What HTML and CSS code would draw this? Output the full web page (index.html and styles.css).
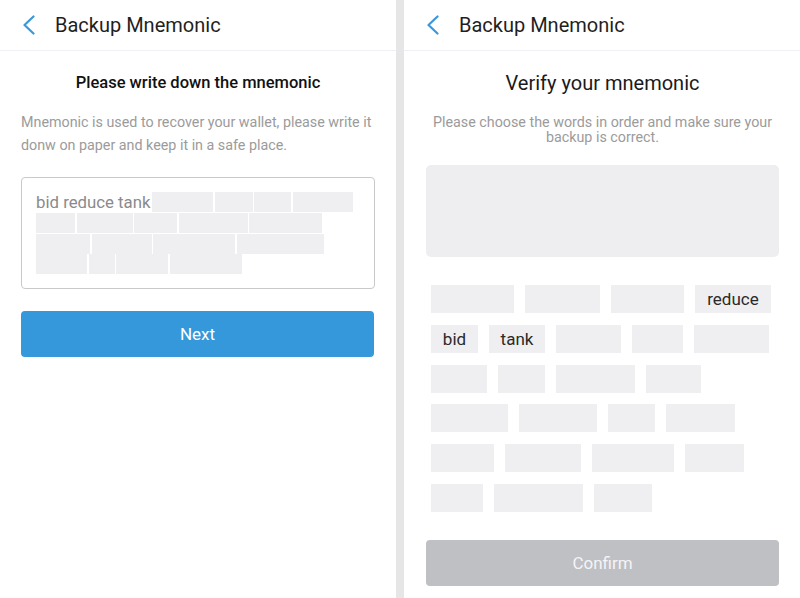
FILE: index.html
```html
<!DOCTYPE html>
<html>
<head>
<meta charset="utf-8">
<link rel="stylesheet" href="styles.css">
</head>
<body>
<div class="screen">
  <section class="panel">
    <header class="topbar">
      <svg class="back" width="14" height="20" viewBox="0 0 14 20"><polyline points="11.5,1.5 2.5,10 11.5,18.5" fill="none" stroke="#3a97dc" stroke-width="2.2" stroke-linecap="round" stroke-linejoin="round"/></svg>
      <h1 class="title">Backup Mnemonic</h1>
    </header>
    <div class="content">
      <h2 class="heading-bold">Please write down the mnemonic</h2>
      <p class="desc-left">Mnemonic is used to recover your wallet, please write it donw on paper and keep it in a safe place.</p>
      <div class="phrase-box">
        <div class="phrase-row"><span class="phrase-text">bid reduce tank</span><span class="mask" style="width:61px"></span><span class="mask" style="width:38px"></span><span class="mask" style="width:37px"></span><span class="mask" style="width:60px"></span></div>
        <div class="phrase-row"><span class="mask" style="width:39px"></span><span class="mask" style="width:56px"></span><span class="mask" style="width:43px"></span><span class="mask" style="width:69px"></span><span class="mask" style="width:73px"></span></div>
        <div class="phrase-row"><span class="mask" style="width:54px"></span><span class="mask" style="width:60px"></span><span class="mask" style="width:82px"></span><span class="mask" style="width:87px"></span></div>
        <div class="phrase-row"><span class="mask" style="width:51px"></span><span class="mask" style="width:26px"></span><span class="mask" style="width:52px"></span><span class="mask" style="width:72px"></span></div>
      </div>
      <button class="btn btn-primary">Next</button>
    </div>
  </section>
  <div class="divider"></div>
  <section class="panel">
    <header class="topbar">
      <svg class="back" width="14" height="20" viewBox="0 0 14 20"><polyline points="11.5,1.5 2.5,10 11.5,18.5" fill="none" stroke="#3a97dc" stroke-width="2.2" stroke-linecap="round" stroke-linejoin="round"/></svg>
      <h1 class="title">Backup Mnemonic</h1>
    </header>
    <div class="content content-right">
      <h2 class="heading">Verify your mnemonic</h2>
      <p class="desc-center">Please choose the words in order and make sure your backup is correct.</p>
      <div class="answer-box"></div>
      <div class="tiles">
        <div class="tile-row"><span class="tile" style="width:83px"></span><span class="tile" style="width:75px"></span><span class="tile" style="width:73px"></span><span class="tile word" style="width:76px">reduce</span></div>
        <div class="tile-row"><span class="tile word" style="width:47px">bid</span><span class="tile word" style="width:56px">tank</span><span class="tile" style="width:65px"></span><span class="tile" style="width:51px"></span><span class="tile" style="width:75px"></span></div>
        <div class="tile-row"><span class="tile" style="width:56px"></span><span class="tile" style="width:47px"></span><span class="tile" style="width:79px"></span><span class="tile" style="width:55px"></span></div>
        <div class="tile-row"><span class="tile" style="width:77px"></span><span class="tile" style="width:78px"></span><span class="tile" style="width:47px"></span><span class="tile" style="width:69px"></span></div>
        <div class="tile-row"><span class="tile" style="width:63px"></span><span class="tile" style="width:76px"></span><span class="tile" style="width:82px"></span><span class="tile" style="width:59px"></span></div>
        <div class="tile-row"><span class="tile" style="width:52px"></span><span class="tile" style="width:89px"></span><span class="tile" style="width:58px"></span></div>
      </div>
      <button class="btn btn-disabled">Confirm</button>
    </div>
  </section>
</div>
</body>
</html>
```

FILE: styles.css
```css
* { box-sizing: border-box; }
html, body {
  margin: 0;
  padding: 0;
  width: 800px;
  height: 598px;
  overflow: hidden;
  background: #ffffff;
  font-family: Roboto, "Liberation Sans", Arial, sans-serif;
}
.screen {
  display: flex;
  width: 800px;
  height: 598px;
}
.panel {
  width: 396px;
  height: 598px;
  background: #ffffff;
  display: flex;
  flex-direction: column;
}
.divider {
  width: 8px;
  height: 598px;
  background: #e6e6e6;
}
.topbar {
  height: 51px;
  border-bottom: 1px solid #eef0f5;
  display: flex;
  align-items: center;
  padding-left: 22px;
  padding-bottom: 1px;
}
.back {
  display: block;
  flex: none;
}
.title {
  margin: 0 0 0 19px;
  font-size: 20px;
  font-weight: 400;
  color: #1f1f1f;
  line-height: 24px;
}
.content {
  padding: 0 21px 0 21px;
}
.content-right {
  padding: 0 21px 0 22px;
}
.heading-bold {
  margin: 22px 0 0 0;
  font-size: 16.5px;
  line-height: 20px;
  font-weight: 500;
  color: #111;
  text-align: center;
}
.heading {
  margin: 20px 0 0 0;
  font-size: 20px;
  line-height: 24px;
  font-weight: 400;
  color: #1a1a1a;
  text-align: center;
}
.desc-left {
  margin: 18px 0 0 0;
  font-size: 14.3px;
  line-height: 22.5px;
  color: #9b9b9b;
}
.desc-center {
  margin: 19.5px 0 0 0;
  font-size: 14.3px;
  line-height: 15px;
  color: #9b9b9b;
  text-align: center;
}
.phrase-box {
  margin-top: 21px;
  height: 112px;
  border: 1px solid #c9c9cc;
  border-radius: 4px;
  padding: 14px 14px 0 14px;
}
.phrase-row {
  display: flex;
  gap: 1.5px;
  height: 20px;
  margin-bottom: 0.8px;
  align-items: stretch;
}
.phrase-text {
  font-size: 16.8px;
  line-height: 20px;
  color: #8a8a8e;
}
.mask {
  display: block;
  height: 20px;
  background: #efeff1;
}
.btn {
  display: block;
  width: 100%;
  height: 46px;
  border: none;
  border-radius: 4px;
  font-family: Roboto, "Liberation Sans", Arial, sans-serif;
  font-size: 17px;
  color: #ffffff;
  padding: 0;
}
.btn-primary {
  margin-top: 22px;
  width: 353px;
  background: #3598db;
}
.btn-disabled {
  margin-top: 28px;
  width: 353px;
  background: #bfc0c4;
  color: #f4f4f6;
}
.answer-box {
  margin-top: 20.5px;
  height: 92px;
  background: #eeeef0;
  border-radius: 5px;
}
.tiles {
  margin-top: 28px;
  padding-left: 5px;
  display: flex;
  flex-direction: column;
  gap: 11.8px;
}
.tile-row {
  display: flex;
  gap: 11px;
}
.tile {
  display: flex;
  align-items: center;
  justify-content: center;
  height: 28px;
  background: #efeff1;
  font-size: 17px;
  color: #2a2a2a;
}
```
